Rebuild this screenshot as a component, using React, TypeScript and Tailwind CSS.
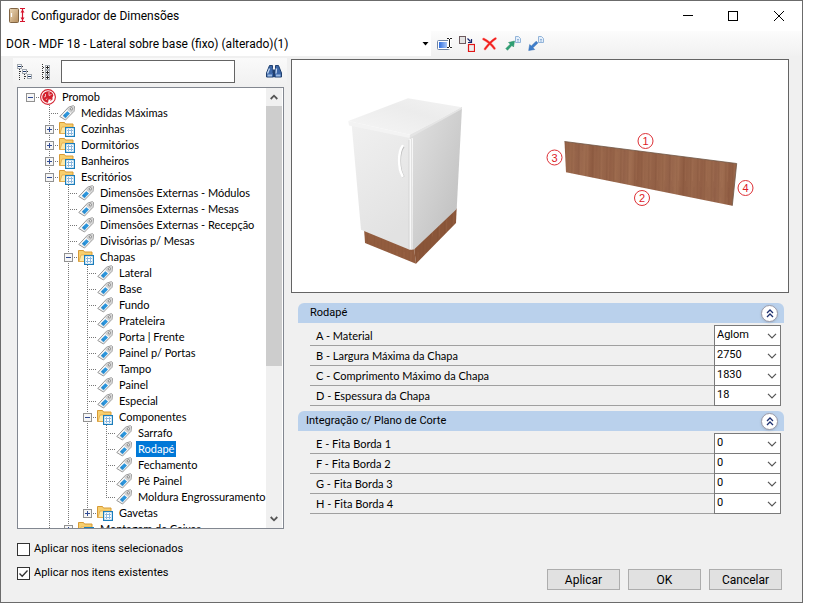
import { useState } from 'react';

type TreeNode = {
    name: string;
    children?: TreeNode[];
    open?: boolean;
    hasMore?: boolean; // more siblings follow below the loaded ones
};

const leaf = (name: string): TreeNode => ({ name });

const tree: TreeNode = {
    name: 'Promob',
    open: true,
    children: [
        leaf('Medidas Máximas'),
        { name: 'Cozinhas', children: [] },
        { name: 'Dormitórios', children: [] },
        { name: 'Banheiros', children: [] },
        {
            name: 'Escritórios',
            open: true,
            hasMore: true,
            children: [
                leaf('Dimensões Externas - Módulos'),
                leaf('Dimensões Externas - Mesas'),
                leaf('Dimensões Externas - Recepção'),
                leaf('Divisórias p/ Mesas'),
                {
                    name: 'Chapas',
                    open: true,
                    children: [
                        leaf('Lateral'),
                        leaf('Base'),
                        leaf('Fundo'),
                        leaf('Prateleira'),
                        leaf('Porta | Frente'),
                        leaf('Painel p/ Portas'),
                        leaf('Tampo'),
                        leaf('Painel'),
                        leaf('Especial'),
                        {
                            name: 'Componentes',
                            open: true,
                            children: [
                                leaf('Sarrafo'),
                                leaf('Rodapé'),
                                leaf('Fechamento'),
                                leaf('Pé Painel'),
                                leaf('Moldura Engrossuramento'),
                            ],
                        },
                        { name: 'Gavetas', children: [] },
                    ],
                },
                { name: 'Montagem de Caixas', hasMore: true, children: [] },
            ],
        },
    ],
};

const sections = [
    {
        title: 'Rodapé',
        pad: 'pl-3',
        fields: [
            { label: 'A - Material', value: 'Aglom' },
            { label: 'B - Largura Máxima da Chapa', value: '2750' },
            { label: 'C - Comprimento Máximo da Chapa', value: '1830' },
            { label: 'D - Espessura da Chapa', value: '18' },
        ],
    },
    {
        title: 'Integração c/ Plano de Corte',
        pad: 'pl-2',
        fields: [
            { label: 'E - Fita Borda 1', value: '0' },
            { label: 'F - Fita Borda 2', value: '0' },
            { label: 'G - Fita Borda 3', value: '0' },
            { label: 'H - Fita Borda 4', value: '0' },
        ],
    },
];

const AppIcon = () => (
    <svg width="16" height="16" viewBox="0 0 16 16" aria-hidden="true">
        <defs>
            <linearGradient id="door" x1="0" y1="0" x2="1" y2="1">
                <stop offset="0" stopColor="#ead7b7" />
                <stop offset="1" stopColor="#b58d5c" />
            </linearGradient>
        </defs>
        <rect x=".5" y=".5" width="9" height="14" rx="1" fill="url(#door)" stroke="#806443" />
        <path d="M2.500 5v4" stroke="#fff" strokeWidth="1.200" />
        <path d="M11 .5h5M11 13.500h5" stroke="#d5132c" />
        <path d="M13.500 1v12" stroke="#d5132c" strokeWidth="1.200" />
        <path d="M11.500 4.500l2-3 2 3zM11.500 9.500l2 3 2-3z" fill="#d5132c" />
    </svg>
);

const CollapseAllIcon = () => (
    <svg width="16" height="16" viewBox="0 0 16 16" fill="none" shapeRendering="crispEdges" aria-hidden="true">
        <path d="M2.500 5v11M7.500 10v6M5 2.500h2M3 7.500h2M10 7.500h1M8 12.500h2" stroke="#333" strokeDasharray="1 1" />
        <path d="M.5.5h4v4h-4zM5.500 5.500h4v4h-4zM10.500 10.500h4v4h-4z" fill="#fff" stroke="#a3a9b0" />
        <path d="M1 2.500h3M6 7.500h3M11 12.500h3" stroke="#1f3a6b" />
    </svg>
);

const ExpandAllIcon = () => (
    <svg width="16" height="16" viewBox="0 0 16 16" fill="none" shapeRendering="crispEdges" aria-hidden="true">
        <path d="M3.500 0v16M4 3.500h2M4 8.500h2M4 13.500h2" stroke="#333" strokeDasharray="1 1" />
        <path d="M6.500 1.500h4v4h-4zM6.500 6.500h4v4h-4zM6.500 11.500h4v4h-4z" fill="#fff" stroke="#a3a9b0" />
        <path d="M7 3.500h3M8.500 2v3M7 8.500h3M8.500 7v3M7 13.500h3M8.500 12v3" stroke="#222" />
    </svg>
);

const BinocularsIcon = () => (
    <svg width="16" height="16" viewBox="0 0 16 16" aria-hidden="true">
        <path d="M3.500 1.500h3v3l1 2v6.500h-7v-4zM9.500 1.500h3l3 7.500v4h-7V6.500l1-2z" fill="#3d67a8" stroke="#21406f" />
        <path d="M6.500 6h3v3h-3z" fill="#21406f" />
        <path d="M3.500 4.500l-2 5M10.500 4.500l-.5 5" stroke="#c2d7f2" strokeWidth="1.300" />
        <path d="M1.500 10.500h4.500v2H1.500zM10 10.500h4.500v2H10z" fill="#9cbbe4" />
    </svg>
);

const RenameIcon = () => (
    <svg width="16" height="16" viewBox="0 0 16 16" fill="none" aria-hidden="true">
        <defs>
            <linearGradient id="rename">
                <stop offset="0" stopColor="#2f6fe0" />
                <stop offset="1" stopColor="#a9c8fa" />
            </linearGradient>
        </defs>
        <rect x="1.500" y="4.500" width="12" height="9" rx="1" fill="#fff" stroke="#6f85a6" />
        <rect x="3" y="6" width="8" height="6" fill="url(#rename)" />
        <path d="M11 2.500h5M11 11.500h5M13.500 3v8" stroke="#fff" strokeWidth="3" />
        <path d="M11 2.500h2M14 2.500h2M11 11.500h2M14 11.500h2M13.500 3v8" stroke="#222" />
    </svg>
);

const ReplaceIcon = () => (
    <svg width="16" height="16" viewBox="0 0 16 16" fill="none" aria-hidden="true">
        <rect x=".5" y=".5" width="6" height="7" fill="#e3e3e3" stroke="#6d5a5e" />
        <path d="M8.500 2.500l3 3M12.500 3v3.500H9" stroke="#16256b" strokeWidth="1.200" />
        <rect x="9.500" y="8.500" width="6" height="7" fill="#eee" stroke="#e01616" strokeWidth="1.200" />
    </svg>
);

const DeleteIcon = () => (
    <svg width="16" height="16" viewBox="0 0 16 16" fill="none" aria-hidden="true">
        <path d="M1.500 3C5.500 5 10 9 12.500 12.500M13.500 2.500C9.500 5 6 9 3 13" stroke="#ff8a86" strokeWidth="2.600" strokeLinecap="round" />
        <path d="M1.500 3C5.500 5 10 9 12.500 12.500M13.500 2.500C9.500 5 6 9 3 13" stroke="#f0201f" strokeWidth="1.500" strokeLinecap="round" />
    </svg>
);

const Sheet = () => (
    <>
        <path d="M10.500.5h3l2 2v4h-5z" fill="#e4effb" stroke="#93b4d9" />
        <path d="M12 3.500h2M12 5h2" stroke="#93b4d9" />
    </>
);

const ExportIcon = () => (
    <svg width="16" height="16" viewBox="0 0 16 16" fill="none" aria-hidden="true">
        <Sheet />
        <path d="M3.500 6.500l6-1.500-1 6-1.600-1.600-4.400 4.900-1.700-1.700 4.500-4.500z" fill="#2ea073" stroke="#278a62" strokeWidth=".5" />
    </svg>
);

const ImportIcon = () => (
    <svg width="16" height="16" viewBox="0 0 16 16" fill="none" aria-hidden="true">
        <Sheet />
        <path d="M.7 14.500l1-6 1.600 1.600L8.200 5.200l1.700 1.700L5 11.800l1.700 1.700z" fill="#3f7fcb" stroke="#2f69b0" strokeWidth=".5" />
    </svg>
);

const PromobIcon = () => (
    <svg width="16" height="16" viewBox="0 0 16 16" aria-hidden="true">
        <circle cx="8" cy="8" r="7.400" fill="#fff" stroke="#d3222f" strokeWidth="1.100" />
        <path d="M8 2.200a5.800 5.800 0 1 0 0 11.600l.6-3.300h3l1.800-4.300A5.800 5.800 0 0 0 8 2.200z" fill="#d3222f" />
        <path d="M10.500 11.500l2.300-1.800" stroke="#d3222f" />
        <path d="M9 3v3.500l2.500-1M5.500 5v2.500l-1.500.5M7 9.500l-1 1.500" stroke="#fff" strokeWidth=".7" fill="none" />
    </svg>
);

const TagIcon = () => (
    <svg width="16" height="16" viewBox="0 0 16 16" aria-hidden="true">
        <path d="M.8 11.500L9.500 2.200l4.800-1.500 1.200.8-.5 4.800L6.500 15z" fill="#f7f7f7" stroke="#8a8a8a" strokeWidth=".9" />
        <path d="M9.800 3l4.300-1.400.6.400-.5 4-2 2-4-3.300z" fill="#cdcdcd" />
        <circle cx="12.400" cy="3.800" r="1.100" fill="#fff" stroke="#777" strokeWidth=".8" />
        <path d="M4 10.600l4.300-4.400 2.700 2.300L6.600 13z" fill="#2b95dc" />
        <path d="M4 10.600l2.600 2.400M5 9.600l2.600 2.400" stroke="#1c6ca8" strokeWidth=".5" />
    </svg>
);

const FolderIcon = () => (
    <svg width="16" height="16" viewBox="0 0 16 16" aria-hidden="true">
        <path d="M.5 12.500v-11h5l1 1.500h7.500v9.500z" fill="#f7cf6e" stroke="#d79a35" />
        <path d="M1 12.500l2-6.500h11v6.500z" fill="#fde9a9" stroke="#dfa545" strokeWidth=".7" />
        <rect x="6.600" y="6.600" width="8.800" height="8.800" fill="#fff" stroke="#1b7dbb" strokeWidth="1.200" />
        <path d="M8 9.500h6M8 12.500h6M9.500 8v6M12.500 8v6" stroke="#8db9e0" />
    </svg>
);

const ChevronDown = () => (
    <svg className="pointer-events-none absolute top-[7px] right-[3px]" width="10" height="6" viewBox="0 0 10 6" fill="none" aria-hidden="true">
        <path d="M1 .8l4 4 4-4" stroke="#555" strokeWidth="1.200" />
    </svg>
);

// one 19x16 column of the tree's dotted guide lines
const Guide = ({ up, down, right }: { up?: boolean; down?: boolean; right?: boolean }) => (
    <svg className="shrink-0" width="19" height="16" viewBox="0 0 19 16" shapeRendering="crispEdges" aria-hidden="true">
        {up && <path d="M9.500 0v8" stroke="#777" strokeDasharray="1 1" />}
        {down && <path d="M9.500 8v8" stroke="#777" strokeDasharray="1 1" />}
        {right && <path d="M9 8.500h10" stroke="#777" strokeDasharray="1 1" />}
    </svg>
);

type ItemProps = {
    node: TreeNode;
    lines: boolean[];
    last: boolean;
    selected: string;
    onSelect: (name: string) => void;
};

const TreeItem = ({ node, lines, last, selected, onSelect }: ItemProps) => {
    const [open, setOpen] = useState(!!node.open);
    const root = lines.length === 0;
    const children = node.children ?? [];

    return (
        <li role="treeitem" aria-selected={selected === node.name}>
            <div className="flex h-4 items-center">
                {lines.map((line, i) => (
                    <Guide key={i} up={line} down={line} />
                ))}
                <span className="relative flex">
                    <Guide up={!root} down={!last} right />
                    {node.children && (
                        <button
                            onClick={() => setOpen(!open)}
                            aria-label={(open ? 'Recolher ' : 'Expandir ') + node.name}
                            className="absolute top-1 left-[5px] size-[9px]"
                        >
                            <svg width="9" height="9" viewBox="0 0 9 9" shapeRendering="crispEdges" aria-hidden="true">
                                <rect x=".5" y=".5" width="8" height="8" fill="#f6f6f6" stroke="#919191" />
                                <path d={open ? 'M2 4.500h5' : 'M2 4.500h5M4.500 2v5'} stroke="#2f4a93" />
                            </svg>
                        </button>
                    )}
                </span>
                <span className="flex w-5 shrink-0">{root ? <PromobIcon /> : node.children ? <FolderIcon /> : <TagIcon />}</span>
                <button
                    onClick={() => onSelect(node.name)}
                    className={
                        selected === node.name
                            ? 'h-4 bg-[#0078d7] px-[2px] leading-4 whitespace-nowrap text-white'
                            : 'h-4 px-[2px] leading-4 whitespace-nowrap'
                    }
                >
                    {node.name}
                </button>
            </div>
            {open && children.length > 0 && (
                <ul role="group">
                    {children.map((child, i) => (
                        <TreeItem
                            key={child.name}
                            node={child}
                            lines={[...lines, !root && !last]}
                            last={i === children.length - 1 && !child.hasMore}
                            selected={selected}
                            onSelect={onSelect}
                        />
                    ))}
                </ul>
            )}
        </li>
    );
};

const Preview = () => (
    <svg className="block w-full" viewBox="0 0 496 232" role="img" aria-label="Armário com rodapé e bordas numeradas">
        <defs>
            <linearGradient id="top" x1="0" y1="1" x2="1" y2="0">
                <stop offset="0" stopColor="#f6f6f6" />
                <stop offset=".6" stopColor="#ececec" />
                <stop offset="1" stopColor="#f3f3f3" />
            </linearGradient>
            <linearGradient id="front" x1="0" y1="0" x2=".4" y2="1">
                <stop offset="0" stopColor="#f0f0f0" />
                <stop offset="1" stopColor="#e2e2e2" />
            </linearGradient>
            <linearGradient id="side" x1="0" y1="0" x2="1" y2="1">
                <stop offset="0" stopColor="#e2e2e2" />
                <stop offset="1" stopColor="#bcbcbc" />
            </linearGradient>
            <linearGradient id="wood" gradientUnits="userSpaceOnUse" x1="0" y1="0" x2="46" y2="2" spreadMethod="repeat">
                <stop offset="0" stopColor="#925f45" />
                <stop offset=".15" stopColor="#9b694c" />
                <stop offset=".3" stopColor="#936148" />
                <stop offset=".45" stopColor="#9f6d50" />
                <stop offset=".6" stopColor="#8f5c42" />
                <stop offset=".8" stopColor="#99674b" />
                <stop offset="1" stopColor="#925f45" />
            </linearGradient>
            <pattern id="grain" width="7" height="60" patternUnits="userSpaceOnUse" patternTransform="rotate(1)">
                <path d="M1.500 0v60M5 0v26" stroke="#6b3f2a" strokeWidth=".6" opacity=".2" />
                <path d="M3.500 10v44" stroke="#b98561" strokeWidth=".5" opacity=".3" />
            </pattern>
        </defs>

        {/* Plinth */}
        <path d="M72 168l50 19 2 16.700L73 183z" fill="#925c3e" />
        <path d="M122 187l42.700-39-.7 15-40 40.700z" fill="#8a5538" />
        <path d="M72 168l50 19 42.700-39-.7 15-40 40.700L73 183z" fill="url(#grain)" />

        {/* Cabinet */}
        <path d="M59.700 65L118 77v112.500h-1L69 169.700z" fill="url(#front)" />
        <path d="M118 77l52-30-5.300 102-42.700 40.500h-4z" fill="url(#side)" />
        <path d="M56.300 61L116 38.300l54 9-52.300 27.400z" fill="url(#top)" />
        <path d="M56.300 61l61.400 13.700V78L57 65.500z" fill="#f3f3f3" />
        <path d="M117.700 74.700l52.300-27.400v1.700l-52.300 29z" fill="#e4e4e4" />
        <path d="M117 79.500l4-1.500-.5 111.500h-3.200z" fill="#f8f8f8" />
        <path d="M117 80v109" stroke="#d0d0d0" strokeWidth=".8" />
        <path d="M119.500 79v110" stroke="#dadada" strokeWidth=".8" />
        <path d="M111.500 86.500c-5 6-5 23 0 30.500" stroke="#bdbdbd" strokeWidth="2.500" fill="none" />
        <path d="M110.500 86c-4.500 6-4.500 22.500 0 30" stroke="#fff" strokeWidth="2.500" strokeLinecap="round" fill="none" />

        {/* Skirting board */}
        <path d="M272.500 81.500l172.200 22-4.400 42.200L274 112.300z" fill="url(#wood)" />
        <path d="M272.500 81.500l172.200 22-4.400 42.200L274 112.300z" fill="url(#grain)" />
        <path d="M272.500 81.500l172.200 22-4.400 42.200" fill="none" stroke="#6e5746" strokeWidth=".8" />

        {/* Edge numbers */}
        <g fill="none" stroke="#dd3036">
            <circle cx="353.500" cy="81" r="7.500" />
            <circle cx="350" cy="138" r="7.500" />
            <circle cx="262.500" cy="97.500" r="7.500" />
            <circle cx="453.500" cy="128" r="7.500" />
        </g>
        <g fill="#dd2027" fontSize="11" textAnchor="middle" fontFamily="Liberation Sans, sans-serif">
            <text x="353.500" y="85">1</text>
            <text x="350" y="142">2</text>
            <text x="262.500" y="101.500">3</text>
            <text x="453.500" y="132">4</text>
        </g>
    </svg>
);

const Section = ({ title, pad, fields }: (typeof sections)[number]) => {
    const [open, setOpen] = useState(true);

    return (
        <section>
            <h2 className={"flex h-5 items-center justify-between rounded-t-md bg-[#bad1ec] pr-[6px] font-[Roboto,'Liberation_Sans',sans-serif] " + pad}>
                {title}
                <button
                    onClick={() => setOpen(!open)}
                    aria-label={'Recolher ' + title}
                    className="flex size-[17px] items-center justify-center rounded-full border border-[#9a9aa8] bg-white shadow-sm"
                >
                    <svg width="8" height="9" viewBox="0 0 8 9" fill="none" aria-hidden="true">
                        <path d="M1 4l3-3 3 3M1 8l3-3 3 3" stroke="#1d2f6f" strokeWidth="1.300" />
                    </svg>
                </button>
            </h2>
            {open && (
                <div className="mt-[3px] mr-[3px] ml-3">
                    {fields.map(({ label, value }, i) => (
                        <div key={label} className="flex h-5 border-b border-[#a0a0a0]">
                            <label htmlFor={label} className="flex-1 truncate pl-[6px] font-[Lato,'Liberation_Sans',sans-serif] leading-5">
                                {label}
                            </label>
                            <div
                                className={
                                    i === 0
                                        ? 'relative -mt-px -mb-px w-[67px] border border-[#7a7a7a] bg-white'
                                        : 'relative -mb-px w-[67px] border border-t-0 border-[#7a7a7a] bg-white'
                                }
                            >
                                <select
                                    id={label}
                                    defaultValue={value}
                                    className="block h-[18px] w-full appearance-none bg-transparent pl-[2px] leading-4 outline-none"
                                >
                                    <option>{value}</option>
                                </select>
                                <ChevronDown />
                            </div>
                        </div>
                    ))}
                </div>
            )}
        </section>
    );
};

const tools = [
    { label: 'Renomear', icon: <RenameIcon /> },
    { label: 'Substituir', icon: <ReplaceIcon /> },
    { label: 'Excluir', icon: <DeleteIcon /> },
    { label: 'Exportar', icon: <ExportIcon /> },
    { label: 'Importar', icon: <ImportIcon /> },
];

const App = () => {
    const [selected, setSelected] = useState('Rodapé');

    return (
        <div className="min-h-screen bg-white pr-[11px] pb-2 font-[Roboto,'Liberation_Sans',sans-serif] text-[11px] text-black">
            <main className="flex min-h-[calc(100vh-8px)] flex-col border border-[#6b6b6b] bg-[#f0f0f0]">
                {/* Title bar */}
                <header className="flex h-[30px] items-center bg-white pl-2 text-xs">
                    <AppIcon />
                    <h1 className="ml-[6px] flex-1">Configurador de Dimensões</h1>
                    <button aria-label="Minimizar" className="flex h-full w-[45px] items-center justify-center">
                        <svg width="10" height="10" viewBox="0 0 10 10" aria-hidden="true">
                            <path d="M0 4.500h10" stroke="#000" />
                        </svg>
                    </button>
                    <button aria-label="Maximizar" className="flex h-full w-[46px] items-center justify-center">
                        <svg width="10" height="10" viewBox="0 0 10 10" aria-hidden="true">
                            <rect x=".5" y=".5" width="9" height="9" fill="none" stroke="#000" />
                        </svg>
                    </button>
                    <button aria-label="Fechar" className="flex h-full w-[46px] items-center justify-center">
                        <svg width="10" height="10" viewBox="0 0 10 10" aria-hidden="true">
                            <path d="M0 0l10 10M10 0L0 10" stroke="#000" />
                        </svg>
                    </button>
                </header>

                {/* Toolbar */}
                <div className="flex h-[25px] items-center bg-gradient-to-b from-[#fcfcfc] to-[#f1f1f1]">
                    <div className="relative h-full w-[430px] shrink bg-white">
                        <select
                            aria-label="Modelo"
                            className="h-full w-full appearance-none truncate bg-transparent pl-[5px] text-xs outline-none"
                        >
                            <option>DOR - MDF 18 - Lateral sobre base (fixo) (alterado)(1)</option>
                        </select>
                        <svg className="pointer-events-none absolute top-[11px] right-[2px]" width="7" height="4" viewBox="0 0 7 4" aria-hidden="true">
                            <path d="M.5 0h6l-3 3.500z" />
                        </svg>
                    </div>
                    <div className="flex gap-[7px] pl-[5px]">
                        {tools.map(({ label, icon }) => (
                            <button key={label} aria-label={label}>
                                {icon}
                            </button>
                        ))}
                    </div>
                </div>

                <div className="flex flex-1 gap-1 pt-[2px] pr-[13px] pl-3">
                    {/* Item tree */}
                    <div className="w-[274px] shrink-0">
                        <div className="flex h-[27px] items-center bg-gradient-to-b from-[#fafafa] to-[#f1f1f1] pr-[5px] pl-1">
                            <button aria-label="Recolher tudo">
                                <CollapseAllIcon />
                            </button>
                            <button aria-label="Expandir tudo" className="ml-[6px]">
                                <ExpandAllIcon />
                            </button>
                            <input type="text" aria-label="Pesquisar" className="ml-[6px] h-[23px] w-[174px] border border-[#646464] bg-white px-1 outline-none" />
                            <button aria-label="Localizar" className="ml-auto">
                                <BinocularsIcon />
                            </button>
                        </div>
                        <div className="mt-[2px] mr-[3px] ml-1 flex h-[442px] border border-[#828790] bg-white">
                            <ul
                                role="tree"
                                aria-label="Itens"
                                className="min-w-0 flex-1 overflow-hidden pt-px pl-[3px] font-[Lato,'Liberation_Sans',sans-serif]"
                            >
                                <TreeItem node={tree} lines={[]} last selected={selected} onSelect={setSelected} />
                            </ul>
                            <div className="mr-px flex w-4 flex-col bg-[#f0f0f0]">
                                <button aria-label="Rolar para cima" className="flex h-[18px] items-center justify-center">
                                    <svg width="8" height="6" viewBox="0 0 8 6" fill="none" aria-hidden="true">
                                        <path d="M.7 5L4 1.700 7.300 5" stroke="#555" strokeWidth="1.800" />
                                    </svg>
                                </button>
                                <div className="h-[260px] bg-[#cdcdcd]" />
                                <button aria-label="Rolar para baixo" className="mt-auto flex h-[18px] items-center justify-center">
                                    <svg width="8" height="6" viewBox="0 0 8 6" fill="none" aria-hidden="true">
                                        <path d="M.7 1L4 4.300 7.300 1" stroke="#555" strokeWidth="1.800" />
                                    </svg>
                                </button>
                            </div>
                        </div>
                    </div>

                    {/* Preview and parameters */}
                    <div className="min-w-0 flex-1">
                        <div className="mt-px border border-[#646464] bg-white">
                            <Preview />
                        </div>
                        <div className="mt-[10px] mr-[5px] ml-[7px] flex flex-col gap-[5px]">
                            {sections.map((section) => (
                                <Section key={section.title} {...section} />
                            ))}
                        </div>
                    </div>
                </div>

                {/* Footer */}
                <footer className="flex items-end justify-between pt-3 pr-5 pb-3 pl-4">
                    <div className="flex flex-col gap-2 pb-[9px]">
                        {['Aplicar nos itens selecionados', 'Aplicar nos itens existentes'].map((text, i) => (
                            <label key={text} className="flex h-4 items-center gap-1">
                                <span className="relative flex">
                                    <input type="checkbox" defaultChecked={i === 1} className="peer size-[13px] appearance-none border border-[#333] bg-white" />
                                    <svg
                                        className="pointer-events-none absolute inset-0 hidden peer-checked:block"
                                        width="13"
                                        height="13"
                                        viewBox="0 0 13 13"
                                        fill="none"
                                        aria-hidden="true"
                                    >
                                        <path d="M2.500 6.500l2.700 2.800 5.300-5.800" stroke="#333" strokeWidth="1.300" />
                                    </svg>
                                </span>
                                {text}
                            </label>
                        ))}
                    </div>
                    <div className="flex gap-2 text-xs">
                        {['Aplicar', 'OK', 'Cancelar'].map((text) => (
                            <button key={text} className="h-[21px] w-[73px] border border-[#adadad] bg-[#e1e1e1]">
                                {text}
                            </button>
                        ))}
                    </div>
                </footer>
            </main>
        </div>
    );
};

export default App;
